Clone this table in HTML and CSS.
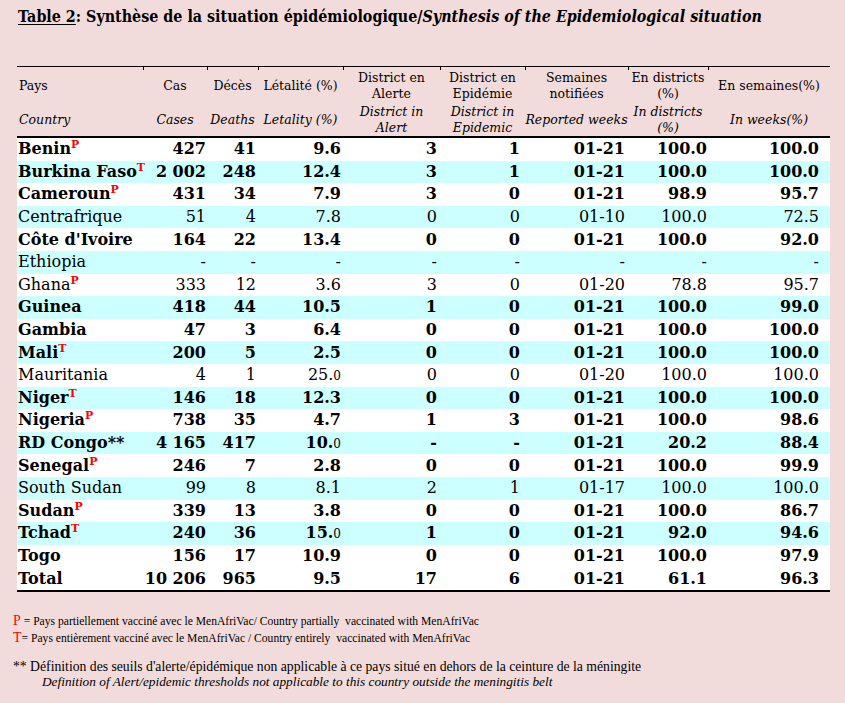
FILE: index.html
```html
<!DOCTYPE html>
<html lang="fr">
<head>
<meta charset="utf-8">
<link rel="stylesheet" href="styles.css">
</head>
<body>
<div class="page">
  <h1 class="title"><u>Table 2</u>: Synthèse de la situation épidémiologique/<i>Synthesis of the Epidemiological situation</i></h1>
  <table class="epi">
    <colgroup>
      <col class="c1"><col class="c2"><col class="c3"><col class="c4"><col class="c5"><col class="c6"><col class="c7"><col class="c8"><col class="c9">
    </colgroup>
    <thead>
      <tr class="h1">
        <th class="pays">Pays</th>
        <th class="tick">Cas</th>
        <th class="tick">Décès</th>
        <th class="tick">Létalité (%)</th>
        <th class="tick">District en<br>Alerte</th>
        <th class="tick">District en<br>Epidémie</th>
        <th class="tick">Semaines<br>notifiées</th>
        <th class="tick">En districts<br>(%)</th>
        <th class="tick">En semaines(%)</th>
      </tr>
      <tr class="h2">
        <th class="pays"><i>Country</i></th>
        <th><i>Cases</i></th>
        <th><i>Deaths</i></th>
        <th><i>Letality (%)</i></th>
        <th><i>District in<br>Alert</i></th>
        <th><i>District in<br>Epidemic</i></th>
        <th><i>Reported weeks</i></th>
        <th><i>In districts<br>(%)</i></th>
        <th><i>In weeks(%)</i></th>
      </tr>
    </thead>
    <tbody>
      <tr class="b"><td>Benin<sup>P</sup></td><td>427</td><td>41</td><td>9.6</td><td>3</td><td>1</td><td>01-21</td><td>100.0</td><td>100.0</td></tr>
      <tr class="b s"><td>Burkina Faso<sup>T</sup></td><td>2&nbsp;002</td><td>248</td><td>12.4</td><td>3</td><td>1</td><td>01-21</td><td>100.0</td><td>100.0</td></tr>
      <tr class="b"><td>Cameroun<sup>P</sup></td><td>431</td><td>34</td><td>7.9</td><td>3</td><td>0</td><td>01-21</td><td>98.9</td><td>95.7</td></tr>
      <tr class="s"><td>Centrafrique</td><td>51</td><td>4</td><td>7.8</td><td>0</td><td>0</td><td>01-10</td><td>100.0</td><td>72.5</td></tr>
      <tr class="b"><td>Côte d'Ivoire</td><td>164</td><td>22</td><td>13.4</td><td>0</td><td>0</td><td>01-21</td><td>100.0</td><td>92.0</td></tr>
      <tr class="s"><td>Ethiopia</td><td>-</td><td>-</td><td>-</td><td>-</td><td>-</td><td>-</td><td>-</td><td>-</td></tr>
      <tr><td>Ghana<sup>P</sup></td><td>333</td><td>12</td><td>3.6</td><td>3</td><td>0</td><td>01-20</td><td>78.8</td><td>95.7</td></tr>
      <tr class="b s"><td>Guinea</td><td>418</td><td>44</td><td>10.5</td><td>1</td><td>0</td><td>01-21</td><td>100.0</td><td>99.0</td></tr>
      <tr class="b"><td>Gambia</td><td>47</td><td>3</td><td>6.4</td><td>0</td><td>0</td><td>01-21</td><td>100.0</td><td>100.0</td></tr>
      <tr class="b s"><td>Mali<sup>T</sup></td><td>200</td><td>5</td><td>2.5</td><td>0</td><td>0</td><td>01-21</td><td>100.0</td><td>100.0</td></tr>
      <tr><td>Mauritania</td><td>4</td><td>1</td><td>25.<span class="od">0</span></td><td>0</td><td>0</td><td>01-20</td><td>100.0</td><td>100.0</td></tr>
      <tr class="b s"><td>Niger<sup>T</sup></td><td>146</td><td>18</td><td>12.3</td><td>0</td><td>0</td><td>01-21</td><td>100.0</td><td>100.0</td></tr>
      <tr class="b"><td>Nigeria<sup>P</sup></td><td>738</td><td>35</td><td>4.7</td><td>1</td><td>3</td><td>01-21</td><td>100.0</td><td>98.6</td></tr>
      <tr class="b s"><td>RD Congo**</td><td>4&nbsp;165</td><td>417</td><td>10.<span class="od">0</span></td><td class="dot">-</td><td class="dot">-</td><td>01-21</td><td>20.2</td><td>88.4</td></tr>
      <tr class="b"><td>Senegal<sup>P</sup></td><td>246</td><td>7</td><td>2.8</td><td>0</td><td>0</td><td>01-21</td><td>100.0</td><td>99.9</td></tr>
      <tr class="s"><td>South Sudan</td><td>99</td><td>8</td><td>8.1</td><td>2</td><td>1</td><td>01-17</td><td>100.0</td><td>100.0</td></tr>
      <tr class="b"><td>Sudan<sup>P</sup></td><td>339</td><td>13</td><td>3.8</td><td>0</td><td>0</td><td>01-21</td><td>100.0</td><td>86.7</td></tr>
      <tr class="b s"><td>Tchad<sup>T</sup></td><td>240</td><td>36</td><td>15.<span class="od">0</span></td><td>1</td><td>0</td><td>01-21</td><td>92.0</td><td>94.6</td></tr>
      <tr class="b"><td>Togo</td><td>156</td><td>17</td><td>10.9</td><td>0</td><td>0</td><td>01-21</td><td>100.0</td><td>97.9</td></tr>
      <tr class="b total"><td>Total</td><td>10&nbsp;206</td><td>965</td><td>9.5</td><td>17</td><td>6</td><td>01-21</td><td>61.1</td><td>96.3</td></tr>
    </tbody>
  </table>
  <div class="notes">
    <p><span class="red">P</span> = Pays partiellement vacciné avec le MenAfriVac/ Country partially&nbsp; vaccinated with MenAfriVac</p>
    <p><span class="red">T</span>= Pays entièrement vacciné avec le MenAfriVac / Country entirely&nbsp; vaccinated with MenAfriVac</p>
  </div>
  <div class="notes def">
    <p>** Définition des seuils d'alerte/épidémique non applicable à ce pays situé en dehors de la ceinture de la méningite</p>
    <p class="en"><i>Definition of Alert/epidemic thresholds not applicable to this country outside the meningitis belt</i></p>
  </div>
</div>
</body>
</html>
```

FILE: styles.css
```css
html, body {
  margin: 0;
  padding: 0;
  background: #f2dcdb;
}
.page {
  width: 845px;
  height: 703px;
  overflow: hidden;
  font-family: "DejaVu Serif", "Liberation Serif", serif;
  color: #000;
}
.title {
  margin: 0;
  padding: 7px 0 0 18px;
  font-size: 15.9px;
  line-height: 20px;
  font-weight: bold;
  font-stretch: condensed;
  font-family: "DejaVu Serif Condensed", "DejaVu Serif", serif;
  white-space: nowrap;
}
.title u {
  text-decoration-thickness: 1px;
  text-underline-offset: 2px;
}
.epi {
  margin: 39px 0 0 17px;
  border-collapse: collapse;
  width: 813px;
  table-layout: fixed;
}
.c1 { width: 126px; }
.c2 { width: 64px; }
.c3 { width: 51px; }
.c4 { width: 85px; }
.c5 { width: 97px; }
.c6 { width: 85px; }
.c7 { width: 103px; }
.c8 { width: 80px; }
.c9 { width: 122px; }

.epi thead tr.h1 th {
  border-top: 1px solid #000;
  height: 34px;
  padding-top: 2px;
}
.epi thead tr.h2 th {
  border-bottom: 2px solid #000;
  height: 33px;
}
.epi th {
  font-weight: normal;
  font-size: 12.5px;
  line-height: 16px;
  text-align: center;
  vertical-align: middle;
  padding: 0;
  white-space: nowrap;
  overflow: hidden;
}
.epi th.pays {
  text-align: left;
  padding-left: 2px;
}
.epi th.tick {
  background: linear-gradient(#000, #000) left top / 1px 3px no-repeat;
}
.epi tbody td {
  background: #fff;
  font-size: 16px;
  height: 22.6px;
  line-height: 18px;
  padding: 0;
  text-align: right;
  white-space: nowrap;
  vertical-align: middle;
}
.epi tbody tr.s td {
  background: #ccffff;
}
.epi tbody tr.b td {
  font-weight: bold;
}
.epi tbody td:nth-child(1) { text-align: left; padding-left: 1px; }
.epi tbody td:nth-child(2) { padding-right: 1px; }
.epi tbody td:nth-child(3) { padding-right: 2px; }
.epi tbody td:nth-child(4) { padding-right: 2px; }
.epi tbody td:nth-child(5) { padding-right: 3px; }
.epi tbody td:nth-child(6) { padding-right: 5px; }
.epi tbody td:nth-child(7) { padding-right: 3px; }
.epi tbody td:nth-child(8) { padding-right: 1px; }
.epi tbody td:nth-child(9) { padding-right: 11px; }
.epi tbody tr.total td {
  border-bottom: 2px solid #000;
}
.epi sup {
  color: #ff0000;
  font-size: 11px;
  font-weight: bold;
  line-height: 0;
  vertical-align: 6px;
}
.od {
  font-size: 12px;
  font-weight: normal;
}
.dot {
  font-size: 12px;
}
.notes {
  font-family: "Liberation Serif", serif;
  font-size: 11.6px;
  line-height: 16px;
  padding-left: 13px;
  margin-top: 21px;
}
.notes p {
  margin: 0;
  white-space: nowrap;
}
.notes.def {
  margin-top: 12px;
  font-size: 13.7px;
  line-height: 15px;
}
.notes .en {
  padding-left: 29px;
  font-size: 13.3px;
}
.red {
  color: #ff0000;
  font-size: 14px;
}
```
